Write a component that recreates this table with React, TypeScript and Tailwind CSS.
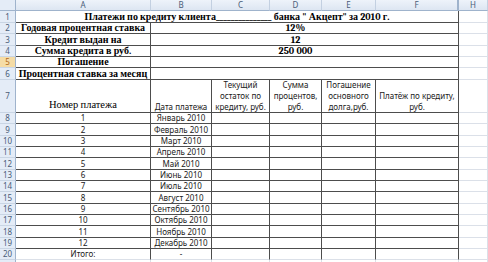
import React from 'react';

type Border = 'dark' | 'light' | 'none';

const rightCls: Record<Border, string> = {
  dark: 'border-r border-r-[#4d4d4d]',
  light: 'border-r border-r-[#dbe0e8]',
  none: '',
};

const bottomCls: Record<Border, string> = {
  dark: 'border-b border-b-[#4d4d4d]',
  light: 'border-b border-b-[#dbe0e8]',
  none: '',
};

const spanCls: Record<number, string> = {
  1: '',
  5: 'col-span-5',
  6: 'col-span-6',
};

interface CellProps {
  span?: number;
  r?: Border;
  b?: Border;
  className?: string;
  children?: React.ReactNode;
}

function Cell({ span = 1, r = 'light', b = 'light', className = '', children }: CellProps) {
  return (
    <div className={`${spanCls[span]} ${rightCls[r]} ${bottomCls[b]} flex whitespace-nowrap min-w-0 ${className}`}>
      {children}
    </div>
  );
}

function RowNum({ n, active }: { n?: number; active?: boolean }) {
  return (
    <div
      className={`flex items-center justify-center border-r border-b border-r-[#9fb3cc] border-b-[#c9d5e4] font-sans text-[8px] leading-none ${
        active ? 'bg-[#f5dca6] text-[#b0691c]' : 'bg-[#e4ecf7] text-[#4a5d78]'
      }`}
    >
      {n}
    </div>
  );
}

const months = [
  'Январь 2010',
  'Февраль 2010',
  'Март 2010',
  'Апрель 2010',
  'Май 2010',
  'Июнь 2010',
  'Июль 2010',
  'Август 2010',
  'Сентябрь 2010',
  'Октябрь 2010',
  'Ноябрь 2010',
  'Декабрь 2010',
];

// Times-like bold for the title block
const serifBold = 'font-serif font-bold text-[10px] text-black';
const sans = 'font-sans text-[8px] text-[#1a1a1a]';

export default function App() {
  const headers = ['A', 'B', 'C', 'D', 'E', 'F', 'H'];

  return (
    <div className="w-[488px] h-[262px] overflow-hidden bg-white">
      <div className="grid grid-cols-[16px_135px_61px_58px_52px_54px_83px_29px] grid-rows-[11px_12px_11px_12px_11px_11px_12px_33px_11px_12px_11px_11px_12px_11px_11px_12px_11px_11px_12px_11px_11px_12px]">
        {/* column header */}
        <div className="bg-[#e4ecf7] border-r border-b border-r-[#9fb3cc] border-b-[#9fb3cc]" />
        {headers.map((h, i) => (
          <div
            key={h}
            className={`flex items-center justify-center bg-gradient-to-b from-[#eef3fa] to-[#dde6f2] border-b border-b-[#9fb3cc] ${
              i === 5 ? 'border-r-2 border-r-[#9fb3cc]' : 'border-r border-r-[#c3d0e1]'
            } font-sans text-[8px] text-[#4a5d78] leading-none`}
          >
            {h}
          </div>
        ))}

        {/* row 1 */}
        <RowNum n={1} />
        <Cell span={6} r="dark" b="dark" className={`${serifBold} items-center justify-center leading-none`}>
          Платежи по кредиту клиента_______________ банка " Акцепт" за 2010 г.
        </Cell>
        <Cell />

        {/* rows 2-6 */}
        {[
          ['Годовая процентная ставка', '12%'],
          ['Кредит выдан на', '12'],
          ['Сумма кредита в руб.', '250 000'],
          ['Погашение', ''],
          ['Процентная ставка за месяц', ''],
        ].map(([label, value], i) => (
          <React.Fragment key={label}>
            <RowNum n={i + 2} active={i === 3} />
            <Cell r="dark" b="dark" className={`${serifBold} items-center justify-center leading-none`}>
              {label}
            </Cell>
            <Cell span={5} r="dark" b="dark" className={`${serifBold} items-center justify-center pr-[18px] leading-none`}>
              {value}
            </Cell>
            <Cell />
          </React.Fragment>
        ))}

        {/* row 7 */}
        <RowNum n={7} />
        <Cell r="dark" b="dark" className="font-serif text-[10.5px] text-black items-end justify-center leading-[12px] pb-[1px]">
          Номер платежа
        </Cell>
        <Cell r="dark" b="dark" className={`${sans} items-end justify-center leading-[11px]`}>
          Дата платежа
        </Cell>
        <Cell r="dark" b="dark" className={`${sans} items-end justify-center text-center whitespace-normal leading-[11px]`}>
          <span>Текущий<br />остаток по<br />кредиту, руб.</span>
        </Cell>
        <Cell r="dark" b="dark" className={`${sans} items-end justify-center text-center whitespace-normal leading-[11px]`}>
          <span>Сумма<br />процентов,<br />руб.</span>
        </Cell>
        <Cell r="dark" b="dark" className={`${sans} items-end justify-center text-center whitespace-normal leading-[11px]`}>
          <span>Погашение<br />основного<br />долга,руб.</span>
        </Cell>
        <Cell r="dark" b="dark" className={`${sans} items-end justify-center text-center whitespace-normal leading-[11px]`}>
          <span>Платёж по кредиту,<br />руб.</span>
        </Cell>
        <Cell />

        {/* rows 8-19 */}
        {months.map((m, i) => (
          <React.Fragment key={m}>
            <RowNum n={i + 8} />
            <Cell r="dark" b="dark" className={`${sans} items-center justify-center leading-none`}>
              {i + 1}
            </Cell>
            <Cell r="dark" b="dark" className={`${sans} items-center justify-center leading-none`}>
              {m}
            </Cell>
            <Cell r="dark" b="dark" />
            <Cell r="dark" b="dark" />
            <Cell r="dark" b="dark" />
            <Cell r="dark" b="dark" />
            <Cell />
          </React.Fragment>
        ))}

        {/* row 20 */}
        <RowNum n={20} />
        <Cell r="dark" className={`${sans} items-center justify-center leading-none`}>
          Итого:
        </Cell>
        <Cell r="dark" className={`${sans} items-center justify-center leading-none`}>
          -
        </Cell>
        <Cell r="dark" />
        <Cell r="dark" />
        <Cell r="dark" />
        <Cell r="dark" />
        <Cell />

        {/* row 21, only its top edge is visible */}
        <RowNum />
        <Cell />
        <Cell />
        <Cell />
        <Cell />
        <Cell />
        <Cell />
        <Cell />
      </div>
    </div>
  );
}
